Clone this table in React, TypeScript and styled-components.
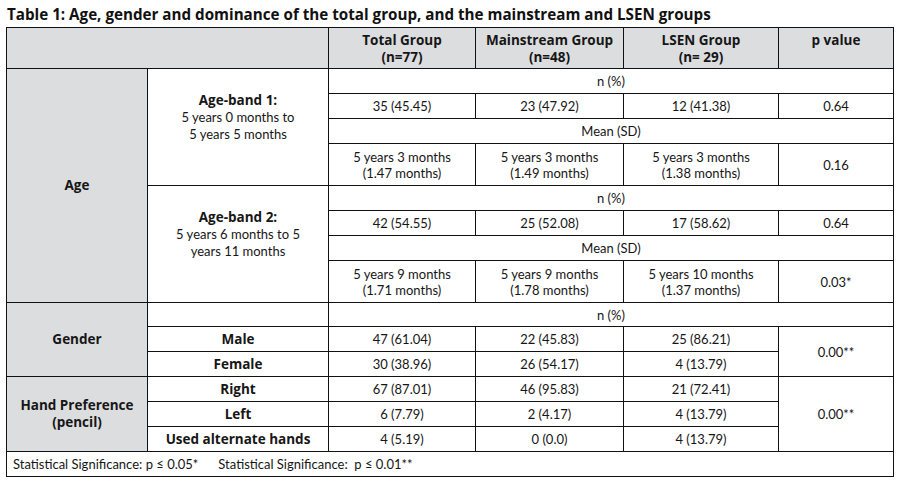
import styled, { createGlobalStyle } from 'styled-components'

const GlobalStyle = createGlobalStyle`
	body {
		margin: 0;
		background: #ffffff;
	}
`

const colWidths = [141, 181, 147, 148, 155, 115]

type Band = {
	label: string
	range: [string, string]
	counts: string[]
	countP: string
	means: [string, string][]
	meanP: string
}

const bands: Band[] = [
	{
		label: 'Age-band 1:',
		range: ['5 years 0 months to', '5 years 5 months'],
		counts: ['35 (45.45)', '23 (47.92)', '12 (41.38)'],
		countP: '0.64',
		means: [
			['5 years 3 months', '(1.47 months)'],
			['5 years 3 months', '(1.49 months)'],
			['5 years 3 months', '(1.38 months)'],
		],
		meanP: '0.16',
	},
	{
		label: 'Age-band 2:',
		range: ['5 years 6 months to 5', 'years 11 months'],
		counts: ['42 (54.55)', '25 (52.08)', '17 (58.62)'],
		countP: '0.64',
		means: [
			['5 years 9 months', '(1.71 months)'],
			['5 years 9 months', '(1.78 months)'],
			['5 years 10 months', '(1.37 months)'],
		],
		meanP: '0.03*',
	},
]

const gender = [
	{ label: 'Male', values: ['47 (61.04)', '22 (45.83)', '25 (86.21)'] },
	{ label: 'Female', values: ['30 (38.96)', '26 (54.17)', '4 (13.79)'] },
]

const hands = [
	{ label: 'Right', values: ['67 (87.01)', '46 (95.83)', '21 (72.41)'] },
	{ label: 'Left', values: ['6 (7.79)', '2 (4.17)', '4 (13.79)'] },
	{ label: 'Used alternate hands', values: ['4 (5.19)', '0 (0.0)', '4 (13.79)'] },
]

export default function App() {
	return (
		<Page>
			<GlobalStyle />
			<Title>Table 1: Age, gender and dominance of the total group, and the mainstream and LSEN groups</Title>
			<Table>
				<colgroup>
					{colWidths.map((w, i) => (
						<col key={i} style={{ width: w }} />
					))}
				</colgroup>
				<tbody>
					<Row $h={41}>
						<HeadCell colSpan={2} />
						<HeadCell>
							Total Group
							<br />
							(n=77)
						</HeadCell>
						<HeadCell>
							Mainstream Group
							<br />
							(n=48)
						</HeadCell>
						<HeadCell>
							LSEN Group
							<br />
							(n= 29)
						</HeadCell>
						<HeadCell>p value</HeadCell>
					</Row>

					{bands.map((band, b) => [
						<Row $h={25} key={`${b}-n`}>
							{b === 0 && <GroupCell rowSpan={8}>Age</GroupCell>}
							<BandCell rowSpan={4}>
								<BandLabel>{band.label}</BandLabel>
								<br />
								{band.range[0]}
								<br />
								{band.range[1]}
							</BandCell>
							<Cell colSpan={4}>n (%)</Cell>
						</Row>,
						<Row $h={25} key={`${b}-c`}>
							{band.counts.map(v => (
								<Cell key={v}>{v}</Cell>
							))}
							<Cell>{band.countP}</Cell>
						</Row>,
						<Row $h={25} key={`${b}-m`}>
							<Cell colSpan={4}>Mean (SD)</Cell>
						</Row>,
						<Row $h={42} key={`${b}-sd`}>
							{band.means.map((m, i) => (
								<Cell key={i}>
									{m[0]}
									<br />
									{m[1]}
								</Cell>
							))}
							<Cell>{band.meanP}</Cell>
						</Row>,
					])}

					<Row $h={24}>
						<GroupCell rowSpan={3}>Gender</GroupCell>
						<Cell />
						<Cell colSpan={4}>n (%)</Cell>
					</Row>
					{gender.map((g, i) => (
						<Row $h={25} key={g.label}>
							<LabelCell>{g.label}</LabelCell>
							{g.values.map((v, j) => (
								<Cell key={j}>{v}</Cell>
							))}
							{i === 0 && <Cell rowSpan={2}>0.00**</Cell>}
						</Row>
					))}

					{hands.map((h, i) => (
						<Row $h={25} key={h.label}>
							{i === 0 && (
								<GroupCell rowSpan={3}>
									Hand Preference
									<br />
									(pencil)
								</GroupCell>
							)}
							<LabelCell>{h.label}</LabelCell>
							{h.values.map((v, j) => (
								<Cell key={j}>{v}</Cell>
							))}
							{i === 0 && <Cell rowSpan={3}>0.00**</Cell>}
						</Row>
					))}

					<Row $h={25}>
						<FootCell colSpan={6}>
							Statistical Significance: p ≤ 0.05*
							<Gap />
							Statistical Significance:&nbsp; p ≤ 0.01**
						</FootCell>
					</Row>
				</tbody>
			</Table>
		</Page>
	)
}

const boldFont = `'Open Sans', Lato, 'Liberation Sans', sans-serif`

const Page = styled.div`
	padding: 0 0 0 6px;

	font-family: Lato, 'Liberation Sans', sans-serif;
	color: #161616;
`

const Title = styled.h1`
	margin: 0;
	padding-left: 1px;

	height: 27px;
	line-height: 29px;

	font-family: ${boldFont};
	font-size: 15.2px;
	font-weight: 700;
	color: #111111;
`

const Table = styled.table`
	border-collapse: collapse;
	table-layout: fixed;

	width: 888px;

	font-size: 13px;
	line-height: 16px;
`

const Row = styled.tr<{ $h: number }>`
	height: ${p => p.$h}px;
`

const Cell = styled.td`
	border: 1px solid #111111;
	padding: 0 4px;

	text-align: center;
	vertical-align: middle;
`

const HeadCell = styled.th`
	border: 1px solid #111111;
	padding: 4px 4px 0;

	background: #dcdddf;

	text-align: center;
	vertical-align: top;

	font-family: ${boldFont};
	font-size: 13.5px;
	font-weight: 700;
	line-height: 17px;
`

const GroupCell = styled(Cell)`
	background: #dcdddf;

	font-family: ${boldFont};
	font-size: 13.5px;
	font-weight: 700;
	line-height: 17px;
`

const BandCell = styled(Cell)`
	padding: 0 6px 20px;
	line-height: 17px;
`

const BandLabel = styled.strong`
	font-family: ${boldFont};
	font-size: 13.5px;
	font-weight: 700;
`

const LabelCell = styled(Cell)`
	font-family: ${boldFont};
	font-size: 13.5px;
	font-weight: 700;
	line-height: 17px;
`

const FootCell = styled(Cell)`
	padding-left: 6px;
	text-align: left;
`

const Gap = styled.span`
	display: inline-block;
	width: 20px;
`
